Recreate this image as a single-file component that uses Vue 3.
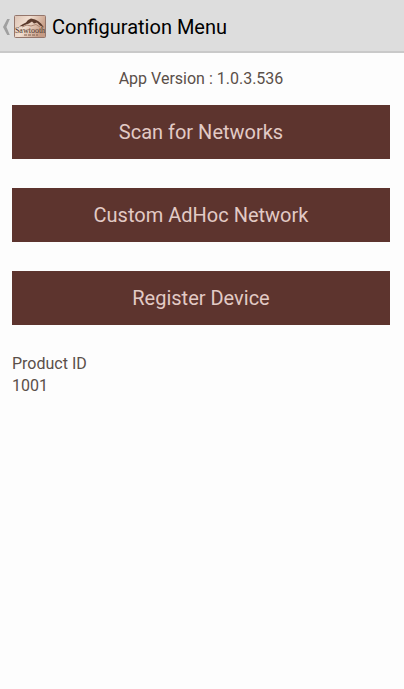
<template>
  <div class="screen">
    <header class="action-bar">
      <button class="up" type="button" aria-label="Back" @click="goBack">
        <svg class="chevron" viewBox="0 0 8 18" aria-hidden="true">
          <path d="M5.2 1 H7.8 L4.4 9 L7.8 17 H5.2 L1 9 Z" />
        </svg>
        <svg class="logo" viewBox="0 0 32 23">
          <defs>
            <linearGradient id="logo-bg" x1="0" y1="0" x2="1" y2="0.4">
              <stop offset="0" stop-color="#dcc3b4" />
              <stop offset="0.45" stop-color="#f2dfd1" />
              <stop offset="1" stop-color="#c69c85" />
            </linearGradient>
          </defs>
          <rect x="0.5" y="0.5" width="31" height="22" rx="1" fill="url(#logo-bg)" stroke="#94766c" />
          <path class="ridge" d="M5 11.5 L9 9 L12 7.5 L14 5 L17 3.5 L21 4.5 L24 6 L27 8.5 L30 12.5 L26 10.5 L23 7.5 L20 8.5 L18 6.5 L15 8.5 L12 9.5 L9 11 Z" />
          <path class="slope" d="M8 12 L13 10 L17 11 L22 9.5 L26 12" />
          <text class="brand" x="16" y="17.5" text-anchor="middle">Sawtooth</text>
          <path class="tagline" d="M10 20 H24" />
        </svg>
      </button>
      <h1>Configuration Menu</h1>
    </header>

    <main class="content">
      <p class="version">App Version : {{ version }}</p>

      <div class="actions">
        <button v-for="action in actions" :key="action" class="action" type="button">
          {{ action }}
        </button>
      </div>

      <dl class="product">
        <dt>Product ID</dt>
        <dd>{{ productId }}</dd>
      </dl>
    </main>
  </div>
</template>

<script setup>
import { ref } from "vue";

const version = ref("1.0.3.536");
const productId = ref("1001");
const actions = ["Scan for Networks", "Custom AdHoc Network", "Register Device"];

function goBack() {
  window.history.back();
}
</script>

<style>
body {
  background-color: #fdfdfd;
}
</style>

<style scoped>
.screen {
  font-family: Roboto, "Liberation Sans", sans-serif;
  font-size: 16px;
  line-height: 22px;
  color: #5a4f49;
}

.action-bar {
  display: flex;
  align-items: center;
  gap: 6px;
  height: 53px;
  padding-top: 2px;
  box-sizing: border-box;
  border-bottom: 2px solid #c9c9c9;
  background-color: #dddddd;
}

.up {
  display: flex;
  align-items: center;
  gap: 4px;
  padding: 0 0 0 2px;
  border: 0;
  background: none;
}

.chevron {
  width: 8px;
  height: 18px;
  fill: #a0a0a0;
}

.logo {
  width: 32px;
  height: 23px;
}

.ridge {
  fill: #5b3a2c;
}

.slope {
  fill: none;
  stroke: #a98470;
  stroke-width: 1;
}

.brand {
  font-family: "Liberation Serif", serif;
  font-size: 8px;
  fill: #4c342a;
}

.tagline {
  stroke: #80604f;
  stroke-width: 1;
  stroke-dasharray: 3 1;
}

h1 {
  margin: 0;
  font-size: 20px;
  font-weight: 400;
  line-height: 28px;
  color: #000000;
}

.content {
  padding: 15px 14px 15px 12px;
}

.version {
  margin: 0 0 15px;
  text-align: center;
}

.actions {
  display: flex;
  flex-direction: column;
  gap: 29px;
}

.action {
  height: 54px;
  padding: 0 12px;
  border: 0;
  background-color: #5d342e;
  color: #e2cac5;
  font-family: inherit;
  font-size: 20px;
}

.product {
  margin: 28px 0 0;
}

.product dd {
  margin: 0;
}
</style>
